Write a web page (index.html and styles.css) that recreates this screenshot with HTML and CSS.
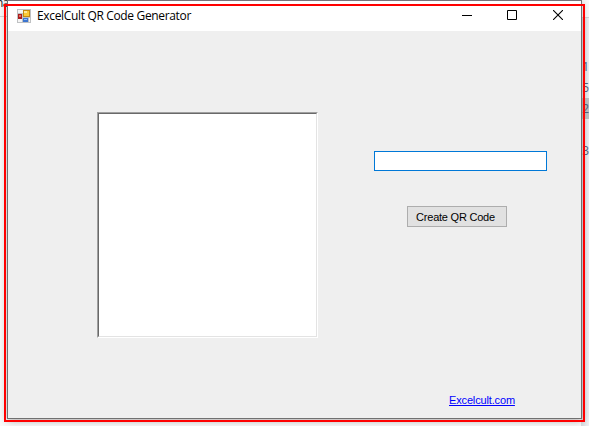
FILE: index.html
```html
<!DOCTYPE html>
<html lang="en">
<head>
<meta charset="utf-8">
<title>ExcelCult QR Code Generator</title>
<link rel="stylesheet" href="styles.css">
</head>
<body>
<div class="behind-left">na</div>
<div class="behind-right"><span>1</span><span>5</span><span class="selected">2</span><span></span><span>3</span></div>
<main class="window">
  <header class="titlebar">
    <svg class="app-icon" width="14" height="14" viewBox="0 0 14 14" shape-rendering="crispEdges">
      <rect width="14" height="14" fill="#bfc1c3"/>
      <path d="M1 1h4v3H1zM5 1h1v3H5zM1 10h4v3H1zM12 9h1v4h-1z" fill="#f5f5f5"/>
      <rect x="1" y="5" width="4" height="5" fill="#a91c1c"/><rect x="2" y="6" width="2" height="2" fill="#e46c60"/>
      <rect x="6" y="1" width="7" height="7" fill="#c58a12"/><rect x="7" y="2" width="5" height="5" fill="#fbc936"/><rect x="7" y="2" width="3" height="2" fill="#ffe79a"/>
      <rect x="6" y="9" width="5" height="4" fill="#3c75d0"/><rect x="7" y="10" width="3" height="1" fill="#8ebcff"/>
    </svg>
    <h1>ExcelCult QR Code Generator</h1>
    <div class="controls">
      <svg width="10" height="10" viewBox="0 0 10 10"><path d="M0 5.5h10" stroke="#000"/></svg>
      <svg width="10" height="10" viewBox="0 0 10 10"><path d="M.5.5h9v9h-9z" fill="none" stroke="#000"/></svg>
      <svg width="10" height="10" viewBox="0 0 10 10"><path d="M0 0l10 10M10 0L0 10" stroke="#000" stroke-width="1.1"/></svg>
    </div>
  </header>
  <section class="client">
    <div class="picture"><div class="picture-inner"></div></div>
    <form class="fields">
      <input type="text" aria-label="QR text">
      <button type="button">Create QR Code</button>
      <a href="#">Excelcult.com</a>
    </form>
  </section>
</main>
<div class="highlight"></div>
</body>
</html>
```
FILE: styles.css
```css
* { box-sizing: border-box; }
body {
  margin: 0;
  width: 589px;
  height: 426px;
  overflow: hidden;
  position: relative;
  background: #fafafa;
  font-family: "Liberation Sans", sans-serif;
}
.behind-left {
  position: absolute;
  left: -4px;
  top: -5px;
  width: 12px;
  height: 22px;
  border-bottom: 1px solid #d5d5d5;
  font: 12px/16px "Open Sans", sans-serif;
  letter-spacing: -.5px;
  color: #222;
}
.behind-right {
  position: absolute;
  left: 581px;
  top: 17px;
  width: 8px;
  height: 409px;
  padding-top: 38px;
  border-top: 1px solid #d5d5d5;
  background: linear-gradient(90deg, #d9dbde, #eef0f3);
  font: 12px/21px "Open Sans", sans-serif;
  color: #53657f;
}
.behind-right span {
  display: flex;
  justify-content: flex-end;
  height: 21px;
}
.behind-right .selected { background: #bfc1c4; }
.window {
  position: relative;
  width: 575px;
  height: 419px;
  margin-left: 7px;
  border: 1px solid #707070;
  border-top-color: #77737a;
  background: #efefef;
  box-shadow: 0 2px 8px rgba(0, 0, 0, .3);
}
.titlebar {
  display: flex;
  align-items: center;
  height: 30px;
  padding: 0 18px 0 9px;
  background: #fff;
}
.app-icon { margin-top: -1px; }
h1 {
  margin: 0 0 0 6px;
  font: 12px/16px "Open Sans", sans-serif;
  letter-spacing: -.34px;
  white-space: nowrap;
  color: #000;
}
.controls {
  display: flex;
  margin: -2px 0 0 auto;
}
.controls svg { display: block; }
.controls svg:nth-child(2) { margin: 0 36px 0 35px; }
.client {
  display: flex;
  height: 387px;
  padding: 81px 34px 0 89px;
}
.picture {
  width: 221px;
  height: 226px;
  border: 1px solid;
  border-color: #a0a0a0 #fff #fff #a0a0a0;
}
.picture-inner {
  height: 100%;
  border: 1px solid;
  border-color: #696969 #e3e3e3 #e3e3e3 #696969;
  background: #fff;
}
.fields {
  display: flex;
  flex-direction: column;
  width: 173px;
  margin: 39px 0 0 56px;
}
input {
  width: 173px;
  height: 20px;
  padding: 2px;
  border: 1px solid #0078d7;
  border-radius: 0;
  background: #fff;
  outline: 0;
}
button {
  width: 100px;
  height: 21px;
  margin: 35px 0 0 33px;
  padding: 1px 3px 0 0;
  border: 1px solid #adadad;
  border-radius: 0;
  background: #e1e1e1;
  color: #000;
  font: 11px/17px "Liberation Sans", sans-serif;
  letter-spacing: -.22px;
  white-space: nowrap;
}
a {
  align-self: flex-start;
  margin: 166px 0 0 75px;
  font-size: 11px;
  line-height: 14px;
  letter-spacing: -.15px;
  color: #00f;
}
.highlight {
  position: absolute;
  left: 4px;
  top: 4px;
  width: 581px;
  height: 418px;
  border: 2px solid #f00;
  pointer-events: none;
}
```
